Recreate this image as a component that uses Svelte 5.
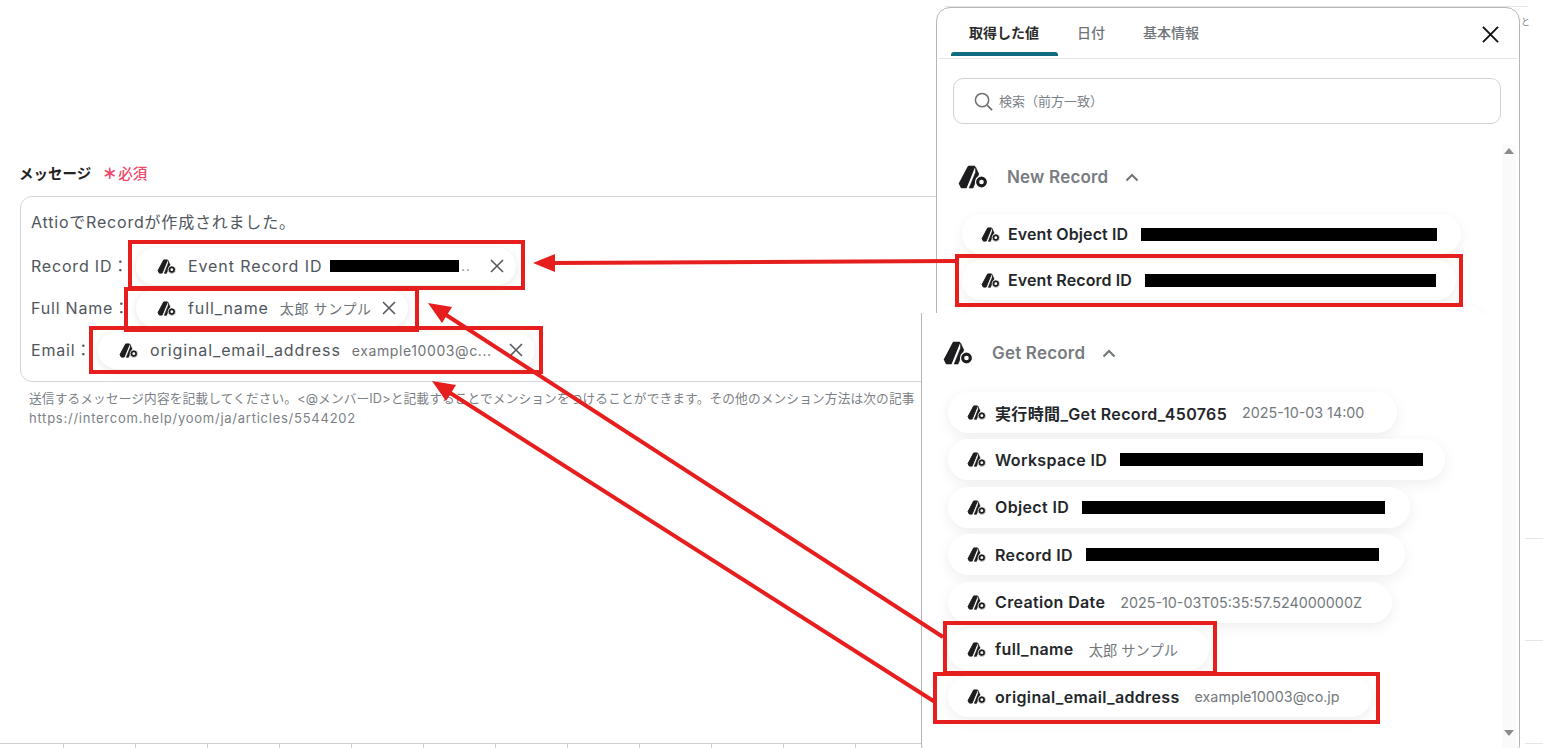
<script>
  const mentions = [
    { label: 'Record ID：', name: 'Event Record ID', bar: 129, tail: '..', width: 380 },
    { label: 'Full Name：', name: 'full_name', value: '太郎 サンプル', width: 272 },
    { label: 'Email：', name: 'original_email_address', value: 'example10003@c...', width: 437 }
  ];

  const newRecord = [
    { name: 'Event Object ID', bar: 296, width: 499 },
    { name: 'Event Record ID', bar: 291, width: 494 },
    { name: '', width: 525 }
  ];

  const getRecord = [
    { name: '実行時間_Get Record_450765', value: '2025-10-03 14:00', width: 449 },
    { name: 'Workspace ID', bar: 303, width: 497 },
    { name: 'Object ID', bar: 303, width: 462 },
    { name: 'Record ID', bar: 293, width: 457 },
    { name: 'Creation Date', value: '2025-10-03T05:35:57.524000000Z', width: 444 },
    { name: 'full_name', value: '太郎 サンプル', width: 261 },
    { name: 'original_email_address', value: 'example10003@co.jp', width: 423 }
  ];

  const ticks = Array.from({ length: 12 });
</script>

{#snippet logo(cls)}
  <svg class={cls} viewBox="0 0 30 24" aria-hidden="true">
    <path d="M10.5 1.5H16.5L8 22.5H3.5L1.5 18.5z" fill="#1d1d1f" stroke="#1d1d1f" stroke-width="1.6" stroke-linejoin="round" />
    <path d="M17.5 2 20.8 9 15 23H11.2L17.6 7.2z" fill="#1d1d1f" stroke="#1d1d1f" stroke-width="0.6" stroke-linejoin="round" />
    <circle cx="23.5" cy="17" r="6" fill="#1d1d1f" stroke="#fff" stroke-width="1.2" />
    <circle cx="23.5" cy="17" r="2.3" fill="#fff" />
  </svg>
{/snippet}

{#snippet chevron()}
  <svg class="chevron" viewBox="0 0 14 9" aria-hidden="true">
    <path d="M1.5 7.5 7 2l5.5 5.5" fill="none" stroke="#6f7477" stroke-width="2" />
  </svg>
{/snippet}

{#snippet outputChip(item)}
  <div class="out-chip" style="width: {item.width}px">
    {#if item.name}
      {@render logo('logo-sm')}
      <span class="out-name">{item.name}</span>
      {#if item.bar}<span class="bar out-bar" style="width: {item.bar}px"></span>{/if}
      {#if item.value}<span class="out-value">{item.value}</span>{/if}
    {/if}
  </div>
{/snippet}

<div class="page">
  <div class="form">
    <div class="field-label">
      <span>メッセージ</span>
      <span class="required"><i>＊</i>必須</span>
    </div>
    <div class="message-box">
      <div class="first-line">AttioでRecordが作成されました。</div>
      {#each mentions as m}
        <div class="mention-row">
          <span class="row-label">{m.label}</span>
          <span class="chip" style="width: {m.width}px">
            {@render logo('logo-sm')}
            <span class="chip-name">{m.name}</span>
            {#if m.bar}<span class="bar chip-bar" style="width: {m.bar}px"></span><span class="chip-tail">{m.tail}</span>{/if}
            {#if m.value}<span class="chip-value">{m.value}</span>{/if}
            <svg class="chip-x" viewBox="0 0 14 14" aria-hidden="true">
              <path d="M1 1l12 12M13 1 1 13" stroke="#55595d" stroke-width="1.6" fill="none" />
            </svg>
          </span>
        </div>
      {/each}
    </div>
    <p class="help">送信するメッセージ内容を記載してください。&lt;@メンバーID&gt;と記載することでメンションをつけることができます。その他のメンション方法は次の記事</p>
    <p class="help link">https://intercom.help/yoom/ja/articles/5544202</p>
  </div>
  <div class="ruler">
    {#each ticks as _}<span class="tick"></span>{/each}
  </div>

  <div class="edge-text">と</div>
  <div class="edge-line top"></div>
  <div class="edge-line l1"></div>
  <div class="edge-line l2"></div>
  <div class="edge-line l3"></div>

  <section class="panel panel-top">
    <div class="tabs">
      <span class="tab active">取得した値</span>
      <span class="tab">日付</span>
      <span class="tab">基本情報</span>
      <svg class="close" viewBox="0 0 18 18" aria-hidden="true">
        <path d="M1 1l16 16M17 1 1 17" stroke="#111" stroke-width="2" fill="none" />
      </svg>
    </div>
    <div class="search">
      <svg class="search-icon" viewBox="0 0 20 20" aria-hidden="true">
        <circle cx="8.5" cy="8.5" r="7" fill="none" stroke="#6c7073" stroke-width="1.6" />
        <path d="M13.6 13.6 19 19" stroke="#6c7073" stroke-width="1.8" fill="none" />
      </svg>
      <span class="placeholder">検索（前方一致）</span>
    </div>
    <div class="section-head">
      {@render logo('logo-lg')}
      <span class="section-name">New Record</span>
      {@render chevron()}
    </div>
    <div class="out-list tight">
      {#each newRecord as item}
        {@render outputChip(item)}
      {/each}
    </div>
    <div class="scrollbar scroll-top"><span class="arrow-up"></span></div>
  </section>

  <section class="panel panel-bottom">
    <div class="section-head">
      {@render logo('logo-lg')}
      <span class="section-name">Get Record</span>
      {@render chevron()}
    </div>
    <div class="out-list">
      {#each getRecord as item}
        {@render outputChip(item)}
      {/each}
    </div>
    <div class="scrollbar scroll-bottom"><span class="arrow-down"></span></div>
  </section>

  <svg class="annotations" width="1543" height="748" aria-hidden="true">
    <g fill="none" stroke="#e61e1e" stroke-width="4">
      <rect x="130" y="242" width="393" height="46" />
      <rect x="126" y="289" width="291" height="41" />
      <rect x="91" y="328" width="450" height="44" />
      <rect x="957" y="256" width="504" height="49" />
      <rect x="945" y="623" width="270" height="50" />
      <rect x="935" y="674" width="443" height="48" />
      <path d="M956 261 550 263" />
      <path d="M943 637 440 311" />
      <path d="M935 702 444 389" />
    </g>
    <g fill="#e61e1e">
      <path d="M533 263 555 254v18z" />
      <path d="M428 303 452 307 442 323z" />
      <path d="M432 381 456 385 446 401z" />
    </g>
  </svg>
</div>

<style>
  :global(body) {
    margin: 0;
    background: #fff;
  }

  .page {
    position: relative;
    display: flex;
    flex-direction: column;
    width: 1543px;
    height: 748px;
    overflow: hidden;
    background: #fff;
    font-family: Inter, "Noto Sans CJK JP", sans-serif;
    color: #50565c;
  }

  .form {
    flex: 1;
    width: 960px;
    padding: 162px 0 0 20px;
    box-sizing: border-box;
  }

  .field-label {
    display: flex;
    align-items: center;
    gap: 11px;
    height: 20px;
    margin-left: -1px;
    font-size: 14.5px;
    font-weight: 600;
    color: #222;
  }

  .required {
    display: flex;
    align-items: center;
    font-size: 14.5px;
    font-weight: 500;
    color: #f2476a;
  }

  .required i {
    font-style: normal;
    font-weight: 900;
    font-size: 15px;
    width: 15px;
    margin-right: 1px;
  }

  .message-box {
    margin-top: 14px;
    padding: 13px 10px 10px;
    height: 186px;
    box-sizing: border-box;
    border: 1px solid #d2d6da;
    border-radius: 12px;
    font-size: 16px;
    letter-spacing: 0.8px;
  }

  .first-line {
    height: 24px;
    line-height: 24px;
    margin-bottom: 11px;
    white-space: nowrap;
  }

  .mention-row {
    display: flex;
    align-items: center;
    height: 42px;
  }

  .row-label {
    white-space: nowrap;
    margin-top: -2px;
    width: 105px;
    flex: none;
  }

  .mention-row:nth-child(4) .row-label {
    width: 67px;
  }

  .chip {
    display: flex;
    align-items: center;
    flex: none;
    height: 37px;
    padding: 0 12px 0 21px;
    box-sizing: border-box;
    border-radius: 19px;
    background: #fff;
    box-shadow: 0 2px 8px rgba(0, 0, 0, 0.1);
  }

  .chip-name {
    margin-left: 12px;
    font-size: 16px;
    letter-spacing: 0.9px;
    white-space: nowrap;
  }

  .chip-value {
    margin-left: 11px;
    font-size: 14px;
    letter-spacing: 0.6px;
    color: #6f7478;
    white-space: nowrap;
  }

  .chip-bar {
    margin-left: 8px;
    height: 12px;
  }

  .chip-tail {
    margin-left: 2px;
    font-size: 13px;
    color: #8a8e92;
  }

  .chip-x {
    width: 14px;
    height: 14px;
    margin-left: auto;
    flex: none;
  }

  .bar {
    display: block;
    flex: none;
    background: #000;
  }

  .help {
    margin: 0 0 0 9px;
    height: 20px;
    line-height: 20px;
    font-size: 12.7px;
    letter-spacing: 0.13px;
    color: #7b8186;
    white-space: nowrap;
  }

  .help.link {
    height: 19px;
    line-height: 19px;
    font-size: 13px;
    letter-spacing: 0.75px;
  }

  .message-box + .help {
    margin-top: 7px;
  }

  .ruler {
    display: flex;
    flex: none;
    width: 921px;
    height: 5px;
    padding-left: 63px;
    box-sizing: border-box;
    border-top: 1px solid #cfcfcf;
  }

  .tick {
    width: 72px;
    flex: none;
    box-sizing: border-box;
    border-left: 1px solid #cfcfcf;
  }

  .panel {
    position: absolute;
    box-sizing: border-box;
    background: #fff;
    overflow: hidden;
  }

  .panel-top {
    left: 936px;
    top: 7px;
    width: 584px;
    height: 320px;
    border: 1.5px solid #b4b7b9;
    border-radius: 14px;
  }

  .panel-bottom {
    left: 921px;
    top: 313px;
    width: 599px;
    height: 445px;
    padding-top: 27px;
    border: 1.5px solid #b4b7b9;
    border-top: none;
    border-radius: 0 0 14px 14px;
  }

  .tabs {
    position: relative;
    display: flex;
    align-items: center;
    height: 50px;
    margin: 0 2px;
    padding-left: 30px;
    border-bottom: 1px solid #e4e6e8;
  }

  .tab {
    margin-right: 38px;
    font-size: 14px;
    font-weight: 500;
    color: #6f7478;
    margin-top: -2px;
  }

  .tab.active {
    position: relative;
    font-weight: 700;
    color: #2b2b2b;
  }

  .tab.active::after {
    content: "";
    position: absolute;
    left: -18px;
    right: -19px;
    bottom: -14px;
    height: 4px;
    border-radius: 3px 3px 0 0;
    background: #0f6b80;
  }

  .close {
    position: absolute;
    right: 18px;
    top: 18px;
    width: 17px;
    height: 17px;
  }

  .search {
    display: flex;
    align-items: center;
    gap: 6px;
    height: 46px;
    margin: 19px 18px 0 16px;
    padding-left: 20px;
    box-sizing: border-box;
    border: 1px solid #cfd3d6;
    border-radius: 10px;
    font-size: 13px;
    color: #7b8186;
  }

  .placeholder {
    margin-top: -2px;
  }

  .search-icon {
    width: 19px;
    height: 19px;
  }

  .section-head {
    display: flex;
    align-items: center;
    height: 26px;
    margin: 40px 0 0 21px;
  }

  .panel-bottom .section-head {
    margin: 0 0 0 21px;
  }

  .section-name {
    margin-left: 19px;
    font-size: 17px;
    font-weight: 600;
    letter-spacing: 0.2px;
    color: #787c7f;
    white-space: nowrap;
  }

  .logo-lg {
    width: 30px;
    height: 24px;
    flex: none;
  }

  .logo-sm {
    width: 19px;
    height: 15px;
    flex: none;
  }

  .chevron {
    width: 14px;
    height: 9px;
    margin-left: 17px;
  }

  .out-list {
    display: flex;
    flex-direction: column;
    gap: 6.4px;
    margin: 26px 0 0 26px;
  }

  .out-list.tight {
    gap: 6px;
    margin: 24px 0 0 25px;
  }

  .out-chip {
    display: flex;
    align-items: center;
    flex: none;
    height: 41px;
    padding-left: 19px;
    box-sizing: border-box;
    border-radius: 21px;
    background: #fff;
    box-shadow: 0 4px 14px rgba(0, 0, 0, 0.07);
  }

  .tight .out-chip {
    height: 40px;
  }

  .out-name {
    margin-left: 9px;
    font-size: 16px;
    font-weight: 600;
    letter-spacing: 0.35px;
    color: #24272a;
    white-space: nowrap;
  }

  .tight .out-name {
    margin-left: 8px;
    letter-spacing: 0.1px;
  }

  .out-bar {
    margin-left: 13px;
    height: 13px;
  }

  .out-value {
    margin-left: 15px;
    font-size: 14.3px;
    color: #74797d;
    white-space: nowrap;
  }

  .scrollbar {
    position: absolute;
    width: 14px;
    background: #fafafa;
  }

  .scroll-top {
    right: 3px;
    top: 137px;
    bottom: 0;
  }

  .scroll-bottom {
    right: 3px;
    top: 0;
    bottom: 0;
  }

  .arrow-up,
  .arrow-down {
    position: absolute;
    left: 2px;
    width: 0;
    height: 0;
    border-left: 5px solid transparent;
    border-right: 5px solid transparent;
  }

  .arrow-up {
    top: 3px;
    border-bottom: 6px solid #8b8b8b;
  }

  .arrow-down {
    top: 417px;
    border-top: 6px solid #8b8b8b;
  }

  .annotations {
    position: absolute;
    left: 0;
    top: 0;
    pointer-events: none;
  }

  .edge-text {
    position: absolute;
    left: 1521px;
    top: 16px;
    font-size: 9px;
    line-height: 12px;
    color: #7b8186;
  }

  .edge-line {
    position: absolute;
    height: 1px;
    background: #e3e5e7;
  }

  .edge-line.top { left: 945px; top: 6px; width: 583px; }
  .edge-line.l1 { left: 1525px; top: 538px; width: 18px; }
  .edge-line.l2 { left: 1525px; top: 640px; width: 18px; }
  .edge-line.l3 { left: 1525px; top: 743px; width: 18px; }
</style>
